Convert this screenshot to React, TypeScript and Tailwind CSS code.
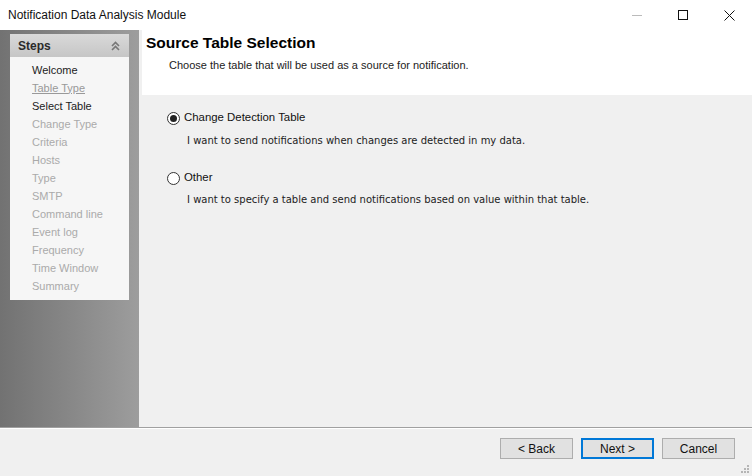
import React from "react";

const steps = [
  { label: "Welcome", state: "done" },
  { label: "Table Type", state: "link" },
  { label: "Select Table", state: "current" },
  { label: "Change Type", state: "off" },
  { label: "Criteria", state: "off" },
  { label: "Hosts", state: "off" },
  { label: "Type", state: "off" },
  { label: "SMTP", state: "off" },
  { label: "Command line", state: "off" },
  { label: "Event log", state: "off" },
  { label: "Frequency", state: "off" },
  { label: "Time Window", state: "off" },
  { label: "Summary", state: "off" },
];

function Radio({ checked }: { checked?: boolean }) {
  return (
    <span className="flex h-[13px] w-[13px] items-center justify-center rounded-full border border-[#333] bg-white">
      {checked && <span className="h-[7px] w-[7px] rounded-full bg-[#222]" />}
    </span>
  );
}

export default function App() {
  return (
    <div className="flex h-[476px] w-[752px] flex-col overflow-hidden bg-[#f0f0f0] font-['Liberation_Sans',Arial,sans-serif] text-[#111]">
      {/* Title bar */}
      <div className="flex h-[30px] shrink-0 items-center bg-white">
        <span className="pl-[8px] text-[12px]">Notification Data Analysis Module</span>
        <div className="ml-auto flex h-full items-center">
          <div className="flex h-full w-[46px] items-center justify-center">
            <span className="h-px w-[10px] bg-[#bbb]" />
          </div>
          <div className="flex h-full w-[46px] items-center justify-center">
            <span className="h-[10px] w-[10px] border border-[#111]" />
          </div>
          <div className="flex h-full w-[46px] items-center justify-center">
            <svg width="11" height="11" viewBox="0 0 11 11">
              <path d="M0.5 0.5L10.5 10.5M10.5 0.5L0.5 10.5" stroke="#111" strokeWidth="1" />
            </svg>
          </div>
        </div>
      </div>

      {/* Body */}
      <div className="flex min-h-0 flex-1">
        {/* Left steps pane */}
        <div className="w-[139px] shrink-0 bg-gradient-to-r from-[#727272] to-[#9d9d9d] pl-[10px] pt-[4px]">
          <div className="w-[119px] bg-[#f6f6f6] pb-[5px]">
            <div className="flex h-[23px] items-center justify-between bg-gradient-to-b from-[#d9d9d9] to-[#c6c6c6] pl-[8px] pr-[9px]">
              <span className="text-[12px] font-bold text-[#2a2a2a]">Steps</span>
              <svg width="9" height="10" viewBox="0 0 9 10">
                <path d="M1 5L4.5 1.5L8 5M1 9L4.5 5.5L8 9" stroke="#777" strokeWidth="1.6" fill="none" />
              </svg>
            </div>
            <ul className="pl-[22px] pt-[4px]">
              {steps.map((s) => (
                <li
                  key={s.label}
                  className={
                    "flex h-[18px] items-center text-[11px] " +
                    (s.state === "done" || s.state === "current"
                      ? "text-[#222]"
                      : s.state === "link"
                      ? "text-[#999] underline"
                      : "text-[#aaa]")
                  }
                >
                  {s.label}
                </li>
              ))}
            </ul>
          </div>
        </div>

        {/* Content */}
        <div className="flex min-w-0 flex-1 flex-col pl-[3px]">
          <div className="h-[65px] bg-white pl-[4px] pt-[3px]">
            <h1 className="text-[15.5px] font-bold leading-[19px] text-black">Source Table Selection</h1>
            <p className="pl-[23px] pt-[5px] text-[11px] text-[#222]">
              Choose the table that will be used as a source for notification.
            </p>
          </div>

          <div className="pl-[25px] pt-[16px] text-[11.4px]">
            <label className="flex h-[14px] items-center gap-[4px]">
              <Radio checked />
              <span>Change Detection Table</span>
            </label>
            <p className="pl-[20px] pt-[8px] font-['DejaVu_Sans',sans-serif] text-[10px] text-[#222]">
              I want to send notifications when changes are detected in my data.
            </p>
            <label className="mt-[23px] flex h-[14px] items-center gap-[4px]">
              <Radio />
              <span>Other</span>
            </label>
            <p className="pl-[20px] pt-[7px] font-['DejaVu_Sans',sans-serif] text-[10px] text-[#222]">
              I want to specify a table and send notifications based on value within that table.
            </p>
          </div>
        </div>
      </div>

      {/* Footer */}
      <div className="relative h-[49px] shrink-0 border-t border-[#a0a0a0]">
        <div className="border-t border-white" />
        <div className="flex justify-end gap-[8px] pr-[17px] pt-[9px] text-[12px]">
          <button className="h-[21px] w-[73px] border border-[#adadad] bg-[#e1e1e1]">&lt; Back</button>
          <button className="h-[21px] w-[73px] border-2 border-[#0078d7] bg-[#e1e1e1]">Next &gt;</button>
          <button className="h-[21px] w-[73px] border border-[#adadad] bg-[#e1e1e1]">Cancel</button>
        </div>
        <svg className="absolute bottom-[3px] right-[3px]" width="8" height="8" viewBox="0 0 8 8">
          <g fill="#b5b5b5">
            <rect x="6" y="0" width="2" height="2" />
            <rect x="3" y="3" width="2" height="2" />
            <rect x="6" y="3" width="2" height="2" />
            <rect x="0" y="6" width="2" height="2" />
            <rect x="3" y="6" width="2" height="2" />
            <rect x="6" y="6" width="2" height="2" />
          </g>
        </svg>
      </div>
    </div>
  );
}
